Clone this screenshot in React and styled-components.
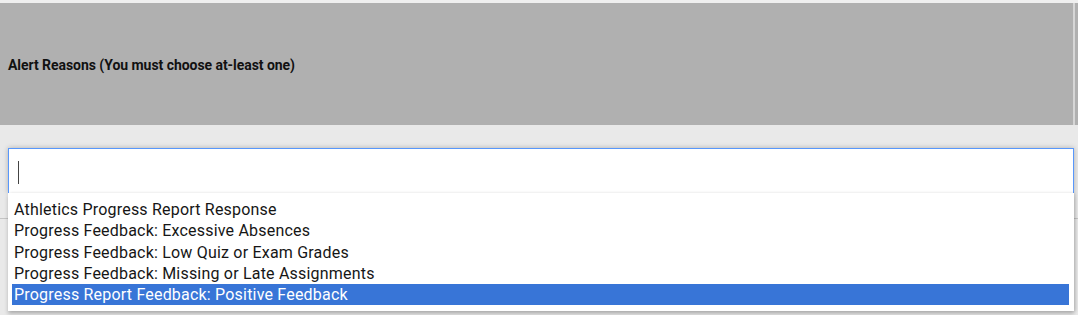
import React from 'react';
import styled, { createGlobalStyle } from 'styled-components';

const reasons = [
  'Athletics Progress Report Response',
  'Progress Feedback: Excessive Absences',
  'Progress Feedback: Low Quiz or Exam Grades',
  'Progress Feedback: Missing or Late Assignments',
  'Progress Report Feedback: Positive Feedback',
];

function App() {
  const [selected, setSelected] = React.useState(4);
  return (
    <Page>
      <GlobalStyle />
      <TopEdge />
      <HeaderRow>
        <Header>
          <Label>Alert Reasons (You must choose at-least one)</Label>
        </Header>
        <HeaderDivider />
        <HeaderTail />
      </HeaderRow>
      <Field>
        <ChoiceBox>
          <Caret />
        </ChoiceBox>
        <Drop>
          <Results>
            {reasons.map((r, i) => (
              <Result key={r} active={i === selected} onMouseEnter={() => setSelected(i)}>
                {r}
              </Result>
            ))}
          </Results>
        </Drop>
      </Field>
      <Below />
    </Page>
  );
}

export default App;

const GlobalStyle = createGlobalStyle`
  html, body {
    margin: 0;
    padding: 0;
    background: #e9e9e9;
    font-family: Roboto, "Liberation Sans", sans-serif;
  }
`;

const Page = styled.div`
  width: 1078px;
  height: 315px;
  overflow: hidden;
  background: #e9e9e9;
  display: flex;
  flex-direction: column;
`;

const TopEdge = styled.div`
  height: 3px;
  background: #efefef;
`;

const HeaderRow = styled.div`
  display: flex;
  height: 122px;
`;

const Header = styled.div`
  flex: 1;
  background: #b0b0b0;
  display: flex;
  align-items: center;
  padding-left: 8px;
  padding-top: 1px;
`;

const HeaderDivider = styled.div`
  width: 2px;
  background: #d6d6d6;
`;

const HeaderTail = styled.div`
  width: 3px;
  background: #b0b0b0;
`;

const Label = styled.span`
  font-size: 14px;
  font-weight: bold;
  color: #111;
  letter-spacing: -0.05px;
`;

const Field = styled.div`
  position: relative;
  margin: 23px 4px 0 8px;
`;

const ChoiceBox = styled.div`
  height: 44px;
  background: #fff;
  border: 1px solid #5897fb;
  border-bottom: 0;
  box-shadow: 0 0 5px rgba(0, 0, 0, 0.25);
  display: flex;
  align-items: center;
  padding-left: 9px;
`;

const Caret = styled.span`
  width: 1px;
  height: 23px;
  background: #444;
  margin-top: 2px;
`;

const Drop = styled.div`
  position: absolute;
  left: 0;
  right: 0;
  top: 45px;
  z-index: 2;
  background: #fff;
  box-shadow: 0 3px 4px rgba(0, 0, 0, 0.22), 2px 0 3px rgba(0, 0, 0, 0.12);
  padding: 6px 5px 6px 4px;
`;

const Results = styled.ul`
  list-style: none;
  margin: 0;
  padding: 0;
`;

const Result = styled.li`
  font-size: 16px;
  line-height: 21.25px;
  letter-spacing: 0.2px;
  padding: 0 2px;
  color: ${p => (p.active ? '#fff' : '#161616')};
  background: ${p => (p.active ? '#3875d7' : 'transparent')};
  white-space: nowrap;
`;

const Below = styled.div`
  margin-top: 25px;
  border-top: 1px solid #c4c4c4;
  flex: 1;
`;
